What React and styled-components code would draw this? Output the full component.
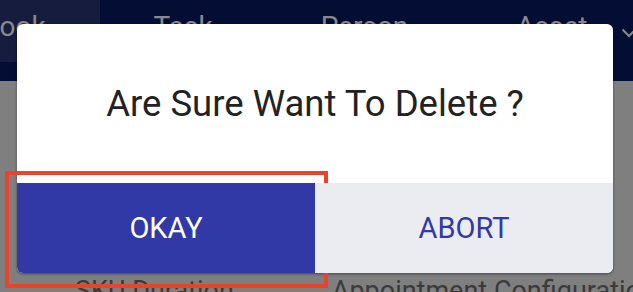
import React from 'react';
import styled, { createGlobalStyle } from 'styled-components';

const GlobalStyle = createGlobalStyle`
  html, body {
    margin: 0;
    padding: 0;
    background: #7f7f7f;
    font-family: Roboto, 'Liberation Sans', sans-serif;
  }
`

const tabs = [
  { label: 'Book', active: true },
  { label: 'Task' },
  { label: 'Person' },
  { label: 'Asset', menu: true },
]

function Chevron() {
  return (
    <svg width="16" height="10" viewBox="0 0 16 10" fill="none">
      <path d="M1.5 1.5 L8 8 L14.5 1.5" stroke="#8a8a8a" strokeWidth="2" />
    </svg>
  )
}

function App() {
  return (
    <Screen>
      <GlobalStyle />
      <NavBar>
        <TabStrip>
          {tabs.map(t => (
            <Tab key={t.label} $active={t.active}>
              {t.label}
              {t.menu && <MenuIcon><Chevron /></MenuIcon>}
            </Tab>
          ))}
        </TabStrip>
      </NavBar>

      <FieldRow>
        <FieldLabel>SKU Duration</FieldLabel>
        <FieldLabel>Appointment Configuration</FieldLabel>
      </FieldRow>

      <Dialog>
        <Message>Are Sure Want To Delete ?</Message>
        <Actions>
          <ActionButton $primary>OKAY</ActionButton>
          <ActionButton>ABORT</ActionButton>
        </Actions>
      </Dialog>
    </Screen>
  )
}

export default App


const Screen = styled.div`
  position: relative;
  width: 633px;
  height: 292px;
  overflow: hidden;
  background: #7f7f7f;
`

const NavBar = styled.div`
  height: 81px;
  background: #040d33;
  overflow: hidden;
`

const TabStrip = styled.div`
  display: flex;
  height: 62px;
  margin-left: -72px; /* strip scrolled sideways */
`

const Tab = styled.div`
  box-sizing: border-box;
  height: 62px;
  padding: 10px 54px 0;
  display: flex;
  align-items: flex-start;
  flex-shrink: 0;
  white-space: nowrap;
  font-size: 28px;
  color: #8a8a8a;
  background: ${props => (props.$active ? '#151c3e' : 'transparent')};
`

const MenuIcon = styled.span`
  display: flex;
  margin: 18px 0 0 33px;
`

const FieldRow = styled.div`
  display: flex;
  gap: 98px;
  padding: 194px 0 0 75px;
  white-space: nowrap;
`

const FieldLabel = styled.div`
  font-size: 27px;
  color: #3a3a3a;
`

const Dialog = styled.div`
  position: absolute;
  left: 17px;
  top: 24px;
  width: 596px;
  height: 249px;
  background: #ffffff;
  border-radius: 6px;
  box-shadow: 0 1px 3px rgba(0, 0, 0, 0.45);
  display: flex;
  flex-direction: column;
`

const Message = styled.div`
  flex: 1;
  display: flex;
  align-items: center;
  justify-content: center;
  font-size: 36.5px;
  color: #222222;
`

const Actions = styled.div`
  display: grid;
  grid-template-columns: 1fr 1fr;
  height: 90px;
`

const ActionButton = styled.button`
  position: relative;
  border: none;
  margin: 0;
  padding: 0;
  font-family: Roboto, 'Liberation Sans', sans-serif;
  font-size: 29px;
  background: ${props => (props.$primary ? '#3139a7' : '#ebecf1')};
  color: ${props => (props.$primary ? '#ffffff' : '#3139a7')};
  border-radius: ${props => (props.$primary ? '0 0 0 6px' : '0 0 6px 0')};

  /* red highlight frame around the confirm button */
  &::after {
    content: ${props => (props.$primary ? "''" : 'none')};
    position: absolute;
    inset: -12px -13px -15px -12px;
    border: 4px solid #e8442b;
    pointer-events: none;
  }
`
